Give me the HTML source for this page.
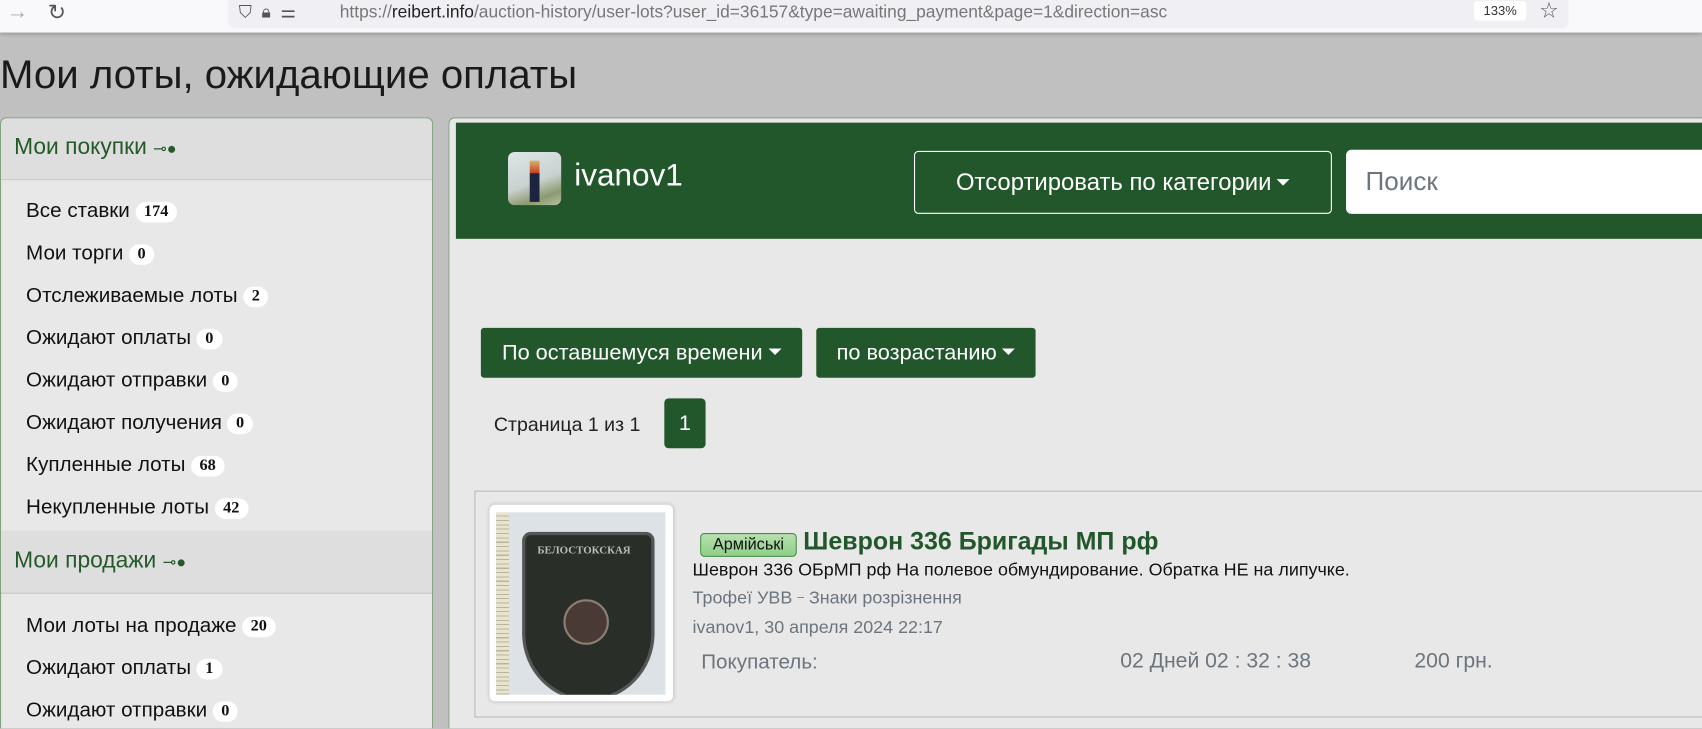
<!DOCTYPE html>
<html><head><meta charset="utf-8"><style>
html,body{margin:0;padding:0;width:1702px;height:729px;overflow:hidden;background:#c2c2c2;font-family:"Liberation Sans","DejaVu Sans",sans-serif;}
#w{position:absolute;left:0;top:0;width:1568px;height:671px;transform:scale(1.0855);transform-origin:0 0;background:#c0c0c0;overflow:hidden}
.a{position:absolute;white-space:nowrap;}
.tb{left:0;top:0;width:1568px;height:30px;background:#f9f9fb;box-shadow:0 2px 4px rgba(0,0,0,.25);}
.url{left:210px;top:0;width:1235px;height:26px;background:#f0f0f4;border-radius:0 0 6px 6px;}
.side{left:0;top:108px;width:399px;height:563px;background:#e8e8e8;border:1px solid #7fa37f;border-bottom:none;border-radius:6px 6px 0 0;box-sizing:border-box;}
.hd{left:0;width:397px;height:56px;background:#dedede;border-bottom:1px solid #c8c8c8;}
.hd span{position:absolute;left:12px;top:15px;font-size:21px;color:#245a2a;}
.it{left:23px;font-size:19px;color:#111;}
.bd{display:inline-block;background:#fff;border-radius:10px;padding:1px 8px;font:bold 15px "Liberation Serif",serif;margin-left:5px;vertical-align:1px;}
.main{left:413px;top:108px;width:1160px;height:563px;background:#e8e8e8;border:1px solid #7fa37f;border-bottom:none;border-radius:6px 6px 0 0;box-sizing:border-box;}
.btn{background:#22562b;color:#fff;border-radius:3px;font-size:20px;}
.car{display:inline-block;width:0;height:0;border-left:6px solid transparent;border-right:6px solid transparent;border-top:6px solid #fff;vertical-align:4px;margin-left:5px;}
.g{color:#6c757d;}
</style></head><body><div id="w">
<div class="a tb"></div>
<div class="a url"></div>
<div class="a" style="left:6px;top:0;font-size:20px;color:#aaa">→</div>
<div class="a" style="left:44px;top:-1px;font-size:20px;color:#555">↻</div>
<div class="a" style="left:220px;top:1px;font-size:16px;color:#555">⛉ &nbsp;🔒︎ &nbsp;⚌</div>
<div class="a" style="left:313px;top:3px;font-size:16px;color:#777">https://<span style="color:#222">reibert.info</span>/auction-history/user-lots?user_id=36157&amp;type=awaiting_payment&amp;page=1&amp;direction=asc</div>
<div class="a" style="left:1358px;top:1px;width:48px;height:18px;background:#fff;border-radius:3px;font-size:12px;color:#333;text-align:center;line-height:18px">133%</div>
<div class="a" style="left:1418px;top:-3px;font-size:20px;color:#555">☆</div>
<div class="a" style="left:0;top:48px;font-size:37px;color:#1a1a1a">Мои лоты, ожидающие оплаты</div>

<div class="a side">
<div class="a hd" style="top:0;border-radius:6px 6px 0 0"><span>Мои покупки <span style="position:static;font-size:15px">⊸●</span></span></div>
<div class="a it" style="top:75px">Все ставки<span class="bd">174</span></div>
<div class="a it" style="top:114px">Мои торги<span class="bd">0</span></div>
<div class="a it" style="top:153px">Отслеживаемые лоты<span class="bd">2</span></div>
<div class="a it" style="top:192px">Ожидают оплаты<span class="bd">0</span></div>
<div class="a it" style="top:231px">Ожидают отправки<span class="bd">0</span></div>
<div class="a it" style="top:270px">Ожидают получения<span class="bd">0</span></div>
<div class="a it" style="top:309px">Купленные лоты<span class="bd">68</span></div>
<div class="a it" style="top:348px">Некупленные лоты<span class="bd">42</span></div>
<div class="a hd" style="top:380px;height:57px;border-top:none"><span style="top:16px">Мои продажи <span style="position:static;font-size:15px">⊸●</span></span></div>
<div class="a it" style="top:457px">Мои лоты на продаже<span class="bd">20</span></div>
<div class="a it" style="top:496px">Ожидают оплаты<span class="bd">1</span></div>
<div class="a it" style="top:535px">Ожидают отправки<span class="bd">0</span></div>
</div>

<div class="a main"></div>
<div class="a" style="left:420px;top:113px;width:1148px;height:107px;background:#22562b"></div>
<div class="a" style="left:468px;top:140px;width:49px;height:49px;border-radius:6px;background:linear-gradient(160deg,#dfe6e8 0%,#c9d2cf 55%,#8c9a70 80%,#b8c0a0 100%);overflow:hidden"><div style="position:absolute;left:20px;top:8px;width:9px;height:38px;background:linear-gradient(#d8b070 0,#c84020 30%,#1c2440 31%,#1c2440 100%)"></div></div>
<div class="a" style="left:529px;top:146px;font-size:29px;color:#fff">ivanov1</div>
<div class="a" style="left:842px;top:139px;width:383px;height:56px;border:1px solid #fff;border-radius:4px;color:#fff;font-size:22px;line-height:56px;text-align:center">Отсортировать по категории<span class="car"></span></div>
<div class="a" style="left:1240px;top:138px;width:328px;height:59px;background:#fff;border-radius:5px 0 0 5px;font-size:24px;line-height:59px;color:#6c757d;text-indent:18px">Поиск</div>

<div class="a btn" style="left:443px;top:302px;width:296px;height:46px;line-height:46px;text-align:center">По оставшемуся времени<span class="car"></span></div>
<div class="a btn" style="left:752px;top:302px;width:202px;height:46px;line-height:46px;text-align:center">по возрастанию<span class="car"></span></div>
<div class="a" style="left:455px;top:381px;font-size:18px;color:#222">Страница 1 из 1</div>
<div class="a btn" style="left:612px;top:367px;width:38px;height:46px;line-height:46px;text-align:center;border-radius:4px">1</div>

<div class="a" style="left:437px;top:452px;width:1131px;height:207px;border:1px solid #bbb;border-right:none"></div>
<div class="a" style="left:451px;top:465px;width:169px;height:181px;background:#fff;border-radius:5px;box-shadow:0 0 4px rgba(0,0,0,.2)"></div>
<div class="a" style="left:457px;top:472px;width:156px;height:168px;background:#dde2e6;overflow:hidden">
<div style="position:absolute;left:0;top:0;width:12px;height:168px;background:repeating-linear-gradient(#e8e4d0 0 3px,#b8b4a0 3px 4px)"></div>
<div style="position:absolute;left:24px;top:18px;width:116px;height:150px;background:#2a2e28;border:3px solid #555;border-radius:8px 8px 50% 50%/8px 8px 40% 40%"></div>
<div style="position:absolute;left:38px;top:30px;font:bold 10px 'Liberation Serif',serif;color:#bbb">БЕЛОСТОКСКАЯ</div>
<div style="position:absolute;left:62px;top:80px;width:38px;height:38px;border-radius:50%;border:2px solid #8a7f70;background:#4a3a35"></div>
</div>
<div class="a" style="left:645px;top:491px;width:87px;height:20px;border:1px solid #3f8f3f;border-radius:4px;background:linear-gradient(#b8e0b0,#8fcf88);font-size:15px;line-height:20px;text-align:center;color:#111">Армійські</div>
<div class="a" style="left:740px;top:485px;font-size:23px;font-weight:bold;color:#22562b">Шеврон 336 Бригады МП рф</div>
<div class="a" style="left:638px;top:516px;font-size:16.5px;color:#111">Шеврон 336 ОБрМП рф На полевое обмундирование. Обратка НЕ на липучке.</div>
<div class="a g" style="left:638px;top:542px;font-size:16.5px">Трофеї УВВ <span style="font-size:11px;vertical-align:3px">–</span> Знаки розрізнення</div>
<div class="a g" style="left:638px;top:569px;font-size:16.5px">ivanov1, 30 апреля 2024 22:17</div>
<div class="a g" style="left:646px;top:600px;font-size:19px">Покупатель:</div>
<div class="a g" style="left:1032px;top:598px;font-size:19.5px">02 Дней 02 : 32 : 38</div>
<div class="a g" style="left:1303px;top:598px;font-size:19.5px">200 грн.</div>
</div></body></html>
